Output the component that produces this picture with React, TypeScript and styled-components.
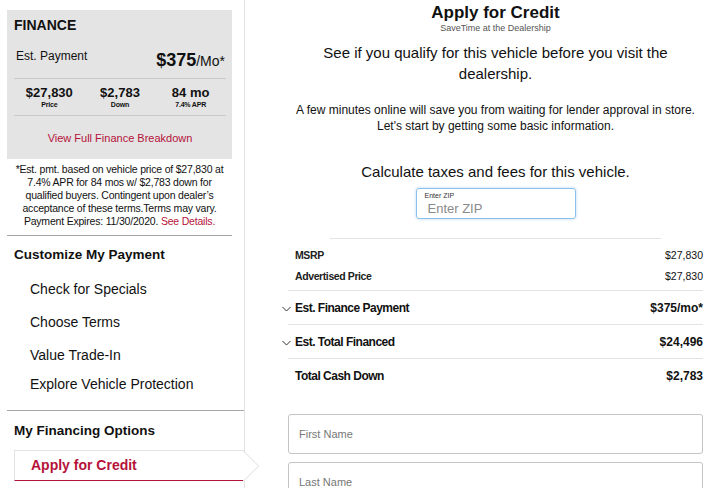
import React from "react";
import styled, { createGlobalStyle } from "styled-components";

const GlobalStyle = createGlobalStyle`
  body {
    margin: 0;
    background: #fff;
    font-family: "Liberation Sans", Arial, sans-serif;
    color: #111;
  }
`;

const RED = "#b5123a";

type Stat = { value: string; label: string };
type PriceRow = { label: string; value: string; toggle?: boolean };

const stats: Stat[] = [
  { value: "$27,830", label: "Price" },
  { value: "$2,783", label: "Down" },
  { value: "84 mo", label: "7.4% APR" },
];

const customize = ["Check for Specials", "Choose Terms", "Value Trade-In", "Explore Vehicle Protection"];

const basics: PriceRow[] = [
  { label: "MSRP", value: "$27,830" },
  { label: "Advertised Price", value: "$27,830" },
];

const totals: PriceRow[] = [
  { label: "Est. Finance Payment", value: "$375/mo*", toggle: true },
  { label: "Est. Total Financed", value: "$24,496", toggle: true },
  { label: "Total Cash Down", value: "$2,783" },
];

function Chevron() {
  return (
    <S.Chevron width="9" height="6" viewBox="0 0 9 6">
      <polyline points="0.5,1 4.5,5 8.5,1" fill="none" stroke="#333" strokeWidth="1" />
    </S.Chevron>
  );
}

export default function App() {
  return (
    <>
      <GlobalStyle />
      <S.Page>
        <S.Sidebar>
          <S.FinanceCard>
            <S.CardTitle>FINANCE</S.CardTitle>
            <S.PaymentRow>
              <S.PaymentLabel>Est. Payment</S.PaymentLabel>
              <S.PaymentValue>
                $375<small>/Mo*</small>
              </S.PaymentValue>
            </S.PaymentRow>
            <S.CardRule />
            <S.Stats>
              {stats.map((s) => (
                <S.Stat key={s.label}>
                  <S.StatValue>{s.value}</S.StatValue>
                  <S.StatLabel>{s.label}</S.StatLabel>
                </S.Stat>
              ))}
            </S.Stats>
            <S.CardRule />
            <S.CardLink>View Full Finance Breakdown</S.CardLink>
          </S.FinanceCard>
          <S.Disclaimer>
            *Est. pmt. based on vehicle price of $27,830 at
            <br />
            7.4% APR for 84 mos w/ $2,783 down for
            <br />
            qualified buyers. Contingent upon dealer’s
            <br />
            acceptance of these terms.Terms may vary.
            <br />
            Payment Expires: 11/30/2020. <S.RedText>See Details.</S.RedText>
          </S.Disclaimer>
          <S.SectionRule />
          <S.NavHeading>Customize My Payment</S.NavHeading>
          <S.NavList>
            {customize.map((item) => (
              <S.NavItem key={item}>{item}</S.NavItem>
            ))}
          </S.NavList>
          <S.SectionRule $full />
          <S.NavHeading $gap={11}>My Financing Options</S.NavHeading>
          <S.ActiveItem>
            Apply for Credit
            <S.Pointer width="17" height="33" viewBox="0 0 17 33">
              <polyline points="0,0.5 15.5,16 0,31.5" fill="#fff" stroke="#dcdcdc" strokeWidth="1" />
            </S.Pointer>
          </S.ActiveItem>
        </S.Sidebar>

        <S.Main>
          <S.Content>
            <S.Title>Apply for Credit</S.Title>
            <S.Subtitle>SaveTime at the Dealership</S.Subtitle>
            <S.Lead>See if you qualify for this vehicle before you visit the dealership.</S.Lead>
            <S.Intro>
              A few minutes online will save you from waiting for lender approval in store.
              <br />
              Let's start by getting some basic information.
            </S.Intro>
            <S.Lead $gap={27}>Calculate taxes and fees for this vehicle.</S.Lead>
            <S.ZipField>
              <S.ZipLabel>Enter ZIP</S.ZipLabel>
              <S.ZipInput placeholder="Enter ZIP" />
            </S.ZipField>
            <S.ShortRule />
            <S.Basics>
              {basics.map((r) => (
                <S.BasicRow key={r.label}>
                  <span>{r.label}</span>
                  <span>{r.value}</span>
                </S.BasicRow>
              ))}
            </S.Basics>
            {totals.map((r, i) => (
              <S.TotalRow key={r.label} $last={i === totals.length - 1}>
                {r.toggle && <Chevron />}
                <S.TotalLabel>{r.label}</S.TotalLabel>
                <span>{r.value}</span>
              </S.TotalRow>
            ))}
            <S.Form>
              <S.TextField placeholder="First Name" />
              <S.TextField placeholder="Last Name" />
            </S.Form>
          </S.Content>
        </S.Main>
      </S.Page>
    </>
  );
}

const S = {
  Page: styled.div`
    display: flex;
    width: 707px;
    height: 488px;
    overflow: hidden;
  `,
  Sidebar: styled.aside`
    position: relative;
    flex: 0 0 245px;
    box-sizing: border-box;
    border-right: 1px solid #e3e3e3;
    padding-top: 10px;
  `,
  FinanceCard: styled.section`
    margin: 0 12px 0 7px;
    padding: 7px 6px 14px 7px;
    background: #e4e4e4;
  `,
  CardTitle: styled.div`
    font-size: 14px;
    font-weight: 700;
    line-height: 16px;
  `,
  PaymentRow: styled.div`
    display: flex;
    justify-content: space-between;
    align-items: flex-start;
    margin: 16px 1px 7px 2px;
  `,
  PaymentLabel: styled.span`
    font-size: 12px;
    line-height: 14px;
  `,
  PaymentValue: styled.span`
    margin-top: 1px;
    font-size: 18px;
    font-weight: 700;
    line-height: 20px;

    small {
      font-size: 14px;
      font-weight: 400;
    }
  `,
  CardRule: styled.hr`
    margin: 0;
    border: 0;
    border-top: 1px solid #c9c9c9;
  `,
  Stats: styled.div`
    display: grid;
    grid-template-columns: repeat(3, 1fr);
    padding: 6px 0 6px;
    text-align: center;
  `,
  Stat: styled.div`
    display: flex;
    flex-direction: column;
    align-items: center;
  `,
  StatValue: styled.span`
    font-size: 13px;
    font-weight: 700;
    line-height: 15px;
  `,
  StatLabel: styled.span`
    font-size: 7px;
    font-weight: 700;
    line-height: 9px;
    letter-spacing: -0.2px;
  `,
  CardLink: styled.div`
    margin-top: 15px;
    font-size: 11px;
    line-height: 14px;
    text-align: center;
    color: ${RED};
  `,
  Disclaimer: styled.p`
    width: 225px;
    margin: 4px 0 0 7px;
    font-size: 10.5px;
    line-height: 13px;
    letter-spacing: -0.2px;
    text-align: center;
    white-space: nowrap;
  `,
  RedText: styled.span`
    color: ${RED};
  `,
  SectionRule: styled.hr<{ $full?: boolean }>`
    margin: ${(p) => (p.$full ? "0 0 0 7px" : "7px 12px 0 7px")};
    border: 0;
    border-top: 1px solid #a6a6a6;
  `,
  NavHeading: styled.h3<{ $gap?: number }>`
    margin: ${(p) => p.$gap ?? 10}px 0 0 14px;
    font-size: 13.5px;
    font-weight: 700;
    line-height: 17px;
  `,
  NavList: styled.ul`
    list-style: none;
    margin: 18px 0 17px;
    padding: 0 0 0 30px;
  `,
  NavItem: styled.li`
    font-size: 14px;
    line-height: 17px;
    margin-bottom: 16px;

    &:nth-child(3) {
      margin-bottom: 12px;
    }
    &:last-child {
      margin-bottom: 0;
    }
  `,
  ActiveItem: styled.div`
    position: relative;
    margin: 11px 0 0 14px;
    height: 31px;
    box-sizing: border-box;
    padding-left: 16px;
    border: 1px solid #e3e3e3;
    border-right: 0;
    border-bottom: 1px solid ${RED};
    font-size: 14px;
    font-weight: 700;
    line-height: 29px;
    color: ${RED};
  `,
  Pointer: styled.svg`
    position: absolute;
    top: -1px;
    right: -16px;
  `,
  Main: styled.main`
    flex: 1;
    padding: 0 4px 0 43px;
  `,
  Content: styled.div`
    width: 415px;
    display: flex;
    flex-direction: column;
    align-items: center;
    text-align: center;
  `,
  Title: styled.h1`
    margin: 3px 0 0;
    font-size: 17px;
    font-weight: 700;
    line-height: 20px;
  `,
  Subtitle: styled.div`
    font-size: 9px;
    line-height: 10px;
    color: #555;
  `,
  Lead: styled.p<{ $gap?: number }>`
    margin: ${(p) => p.$gap ?? 9}px 0 0;
    max-width: 380px;
    font-size: 15px;
    line-height: 21px;
  `,
  Intro: styled.p`
    margin: 18px -8px 0;
    font-size: 12px;
    line-height: 16px;
    white-space: nowrap;
  `,
  ZipField: styled.label`
    display: flex;
    flex-direction: column;
    align-items: flex-start;
    width: 160px;
    height: 31px;
    box-sizing: border-box;
    margin-top: 6px;
    padding: 3px 8px 0;
    border: 1px solid #8cc0ec;
    border-radius: 3px;
    box-shadow: 0 0 3px rgba(90, 160, 230, 0.45);
  `,
  ZipLabel: styled.span`
    font-size: 7px;
    line-height: 8px;
    color: #333;
  `,
  ZipInput: styled.input`
    width: 100%;
    border: 0;
    outline: none;
    padding: 0 0 0 3px;
    margin: 1px 0 0;
    background: transparent;
    font-family: inherit;
    font-size: 13px;
    line-height: 16px;

    &::placeholder {
      color: #8a8a8a;
    }
  `,
  ShortRule: styled.hr`
    width: 331px;
    margin: 19px 0 0;
    border: 0;
    border-top: 1px solid #e3e3e3;
  `,
  Basics: styled.div`
    align-self: stretch;
    padding: 6px 0 3px;
    border-bottom: 1px solid #e3e3e3;
  `,
  BasicRow: styled.div`
    display: flex;
    justify-content: space-between;
    padding-left: 7px;
    font-size: 10.5px;
    font-weight: 700;
    letter-spacing: -0.4px;
    line-height: 21px;
    color: #222;

    span:last-child {
      font-weight: 400;
      letter-spacing: 0;
      color: #111;
    }
  `,
  TotalRow: styled.div<{ $last?: boolean }>`
    position: relative;
    align-self: stretch;
    display: flex;
    justify-content: space-between;
    align-items: center;
    height: 33px;
    padding-left: 7px;
    border-bottom: ${(p) => (p.$last ? "0" : "1px solid #e3e3e3")};
    font-size: 12px;
    font-weight: 700;
  `,
  TotalLabel: styled.span`
    letter-spacing: -0.5px;
  `,
  Chevron: styled.svg`
    position: absolute;
    left: -6px;
    top: 15px;
  `,
  Form: styled.div`
    align-self: stretch;
    display: flex;
    flex-direction: column;
    gap: 8px;
    margin-top: 22px;
  `,
  TextField: styled.input`
    height: 40px;
    box-sizing: border-box;
    padding: 0 10px;
    border: 1px solid #c4c4c4;
    border-radius: 3px;
    font-family: inherit;
    font-size: 11px;

    &::placeholder {
      color: #777;
    }
  `,
};
